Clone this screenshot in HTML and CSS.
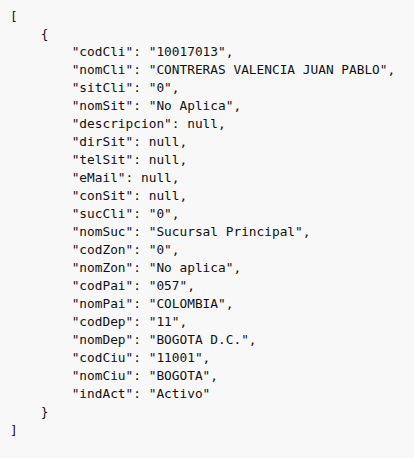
FILE: index.html
```html
<!DOCTYPE html>
<html>
<head>
<meta charset="utf-8">
<link rel="stylesheet" href="styles.css">
</head>
<body>
<pre class="json">[
    {
        "codCli": "10017013",
        "nomCli": "CONTRERAS VALENCIA JUAN PABLO",
        "sitCli": "0",
        "nomSit": "No Aplica",
        "descripcion": null,
        "dirSit": null,
        "telSit": null,
        "eMail": null,
        "conSit": null,
        "sucCli": "0",
        "nomSuc": "Sucursal Principal",
        "codZon": "0",
        "nomZon": "No aplica",
        "codPai": "057",
        "nomPai": "COLOMBIA",
        "codDep": "11",
        "nomDep": "BOGOTA D.C.",
        "codCiu": "11001",
        "nomCiu": "BOGOTA",
        "indAct": "Activo"
    }
]</pre>
</body>
</html>
```
FILE: styles.css
```css
html, body {
  margin: 0;
  padding: 0;
  background: #f8f8f8;
}
.json {
  margin: 0;
  padding: 7px 10px;
  font-family: "DejaVu Sans Mono", monospace;
  font-size: 12.8px;
  line-height: 18px;
  color: #111;
}
```
